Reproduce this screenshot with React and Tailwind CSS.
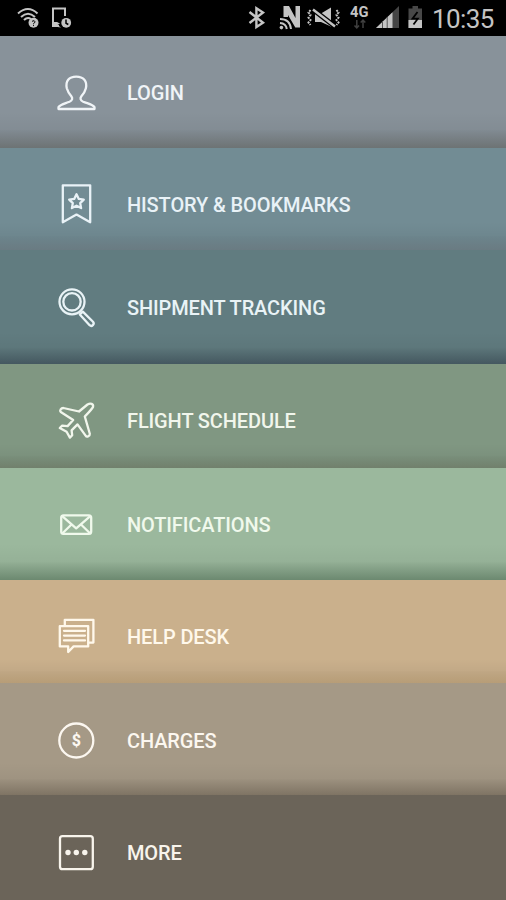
import { clsx } from 'clsx';

const LoginIcon = () => (
  <path d="M4.5 38V36.2C6.5 33.2 10.5 32.7 15.5 30.7C18.5 29.3 18.8 27.3 17.3 25.3C14.8 22.3 13.6 20.3 12.8 17.3C11.3 10.3 14.8 5.6 22.2 5.6C29.6 5.6 33.4 10.3 31.9 17.3C31.2 20.3 29.9 22.3 27.4 25.3C25.9 27.3 26.2 29.3 29.2 30.7C34.2 32.7 38.5 33.2 40.5 36.2V38Z" />
);

const BookmarkIcon = () => (
  <>
    <path d="M8.8 2.3H36.2V39.3L22.5 31.6L8.8 39.3Z" />
    <path d="M22.5 11.3L24.8 15.9L29.8 16.6L26.2 20.1L27.1 25.1L22.5 22.7L17.9 25.1L18.8 20.1L15.2 16.6L20.2 15.9Z" />
  </>
);

const SearchIcon = () => (
  <>
    <circle cx="18" cy="15.8" r="12.5" />
    <circle cx="18" cy="15.8" r="8.7" />
    <path d="M25.8 28.4L35.6 39.2C37.8 41.2 41 38.2 39 35.8L28.8 25.6Z" />
  </>
);

const PlaneIcon = () => (
  <path d="M25 12.5L33.5 5.5C36.5 3.8 39.8 4.8 39 8C38.2 10 34.2 14 30.8 17.5L35.8 34.8C36 36.8 33 38.8 31.6 36.6L23.5 25.4L17.6 31.4L18.2 36.2L15.9 38.6L12.6 32.8L5.8 29L8.2 26.7L13.6 27.1L19.2 21L6.8 13C5.3 11.2 7 9.2 9.4 9Z" />
);

const MailIcon = () => (
  <>
    <rect x="7.2" y="12.3" width="30" height="18.6" rx="2.4" />
    <path d="M8.5 13.3L22.2 25.3L36 13.3M8.5 30.3L17.5 21.5M36 30.3L27 21.5" />
  </>
);

const ChatIcon = () => (
  <>
    <path d="M10.8 10.4V4.8H39.4V27.6H35" />
    <path d="M5.8 11.2H34.2V31.4H19.6L14.2 37V31.4H5.8Z" />
    <path d="M10 15.8H31M10 20.6H31M10 25.4H31" />
  </>
);

const DollarIcon = () => (
  <>
    <circle cx="22.3" cy="21.5" r="17" />
    <text
      x="22.4"
      y="27"
      textAnchor="middle"
      className="fill-current stroke-none text-[16px] font-extrabold"
    >
      $
    </text>
  </>
);

const MoreIcon = () => (
  <>
    <rect x="6" y="5.2" width="32.8" height="33" rx="2.5" />
    <g className="fill-current stroke-none">
      <circle cx="14" cy="21.5" r="2.7" />
      <circle cx="22.3" cy="21.5" r="2.7" />
      <circle cx="30.8" cy="21.5" r="2.7" />
    </g>
  </>
);

const menuItems = [
  { label: 'LOGIN', icon: LoginIcon, row: 'h-28 bg-[#88929a] text-[#f0f4f7]', shade: 'h-9 to-[#6d7374]' },
  { label: 'HISTORY & BOOKMARKS', icon: BookmarkIcon, row: 'h-[102px] bg-[#728c94] text-[#e9f2f7]', shade: 'h-7 to-[#6a7b82]' },
  { label: 'SHIPMENT TRACKING', icon: SearchIcon, row: 'h-[114px] bg-[#617c80] text-[#e9f3f6] pt-px', shade: 'h-8 to-[#445860]' },
  { label: 'FLIGHT SCHEDULE', icon: PlaneIcon, row: 'h-[104px] bg-[#809782] text-[#f1f6ec]', shade: 'h-6 to-[#71806c]' },
  { label: 'NOTIFICATIONS', icon: MailIcon, row: 'h-28 bg-[#9bb89d] text-[#f0f9ec]', shade: 'h-9 to-[#6c8970]' },
  { label: 'HELP DESK', icon: ChatIcon, row: 'h-[103px] bg-[#cab08c] text-[#fff8eb]', shade: 'h-6 to-[#b79d77]' },
  { label: 'CHARGES', icon: DollarIcon, row: 'h-28 bg-[#a59986] text-[#fcf7f0] pt-px', shade: 'h-8 to-[#7f7464]' },
  { label: 'MORE', icon: MoreIcon, row: 'h-[105px] bg-[#6b6459] text-[#f8f4ec] pt-px', shade: 'h-0 to-[#6b6459]' },
];

const MenuRow = ({ label, icon: Icon, row, shade }) => (
  <div className={clsx('relative shrink-0', row)}>
    <div className={clsx('absolute inset-x-0 bottom-0 bg-linear-to-b from-transparent via-black/[0.04] via-50%', shade)} />
    <div className="relative flex h-[113px] items-center pl-[54px]">
      <svg
        viewBox="0 0 44 44"
        className="h-11 w-11 overflow-visible fill-none stroke-current stroke-[2.3]"
        strokeLinejoin="round"
        strokeLinecap="round"
      >
        <Icon />
      </svg>
      <span className="ml-[29px] whitespace-nowrap text-[20px] leading-6 font-medium tracking-[-0.12px]">{label}</span>
    </div>
  </div>
);

const StatusBar = () => (
  <div className="flex h-9 items-center justify-between bg-black text-[#c4c4c4]">
    {/* Notifications */}
    <svg viewBox="0 0 90 36" className="h-9 w-[90px] fill-none stroke-current stroke-2">
      <path d="M18 13.4Q28 4.5 37.5 13.4M21 17Q28 10.5 35 17M24 20Q27.5 16.5 31 19" />
      <circle cx="33.5" cy="22.8" r="5" className="fill-current stroke-none" />
      <path d="M32 21.3Q34.8 19.8 35 21.8Q34.8 23 33.5 23.6V24.2M33.5 25.1V26.1" className="stroke-black stroke-1" />
      <path d="M65 16V8.5H53V26H59" />
      <path d="M54 26.5V22H57L60 23.5L57.5 25L61 27.5Z" className="fill-current stroke-none" />
      <circle cx="66.2" cy="22.8" r="4.9" className="fill-current stroke-none" />
      <path d="M66 19.5V23.2L68.3 24.5" className="stroke-black stroke-[1.5]" />
    </svg>

    {/* System */}
    <div className="flex items-center">
      <svg viewBox="240 0 190 36" className="h-9 w-[190px] fill-none stroke-current stroke-2">
        <path d="M249.5 12L263 22.7L256.4 27V8.2L263 12.5L249.5 23" className="stroke-[2.4]" />
        <path d="M283.5 17V6H289L295.5 18V6H300V27.5H295.3L288 15V17Z" className="fill-current stroke-none" />
        <path d="M280 19Q290 19 291 29M280 23Q286 23.4 286.8 29" />
        <circle cx="281.4" cy="27.6" r="1.8" className="fill-current stroke-none" />
        <path d="M315 13.5H321L331 7.5V26.5L321 22H315Z" className="fill-current stroke-none" />
        <path d="M313 9.5L335 26.5" className="stroke-black stroke-[5]" />
        <path d="M313 9.5L335 26.5" className="stroke-[2.4]" />
        <path d="M310.5 10L308.5 12.5L310.5 15L308.5 17.5L310.5 20L308.5 22.5L310.5 25M336.5 10L338.5 12.5L336.5 15L338.5 17.5L336.5 20L338.5 22.5L336.5 25" strokeDasharray="2 1" />
        <text x="350" y="16.5" textLength="18.5" lengthAdjust="spacingAndGlyphs" className="fill-current stroke-none text-[15.5px] font-bold">4G</text>
        <path d="M356.8 20V28M354.5 25.5L356.8 28L359 25.5M363 28V20M360.7 22.5L363 20L365.3 22.5" className="stroke-[#404040] stroke-[1.5]" />
        <path d="M376 28L399 6V28Z" className="fill-[#454545] stroke-none" />
        <path d="M376 28L392.5 12.2V28Z" className="fill-current stroke-none" />
        <path d="M382.5 21V28M387.2 17V28" className="stroke-[#555] stroke-1" />
        <path d="M408.5 8.5H412.5V6H418V8.5H422V28H408.5Z" className="fill-[#484848] stroke-none" />
        <path d="M408.5 20H422V28H408.5Z" className="fill-current stroke-none" />
        <path d="M417.5 12L412.5 18.7H417.8L413.5 24.5" className="stroke-black stroke-[1.8]" />
      </svg>
      <span className="mt-[2px] mr-3 ml-0.5 w-[62px] whitespace-nowrap text-[26px] leading-8 tracking-[-0.6px]">10:35</span>
    </div>
  </div>
);

export default function App() {
  return (
    <div className="flex h-[900px] w-[506px] flex-col overflow-hidden bg-black font-['Roboto','Liberation_Sans',sans-serif]">
      <StatusBar />
      {menuItems.map((item) => (
        <MenuRow key={item.label} {...item} />
      ))}
    </div>
  );
}
